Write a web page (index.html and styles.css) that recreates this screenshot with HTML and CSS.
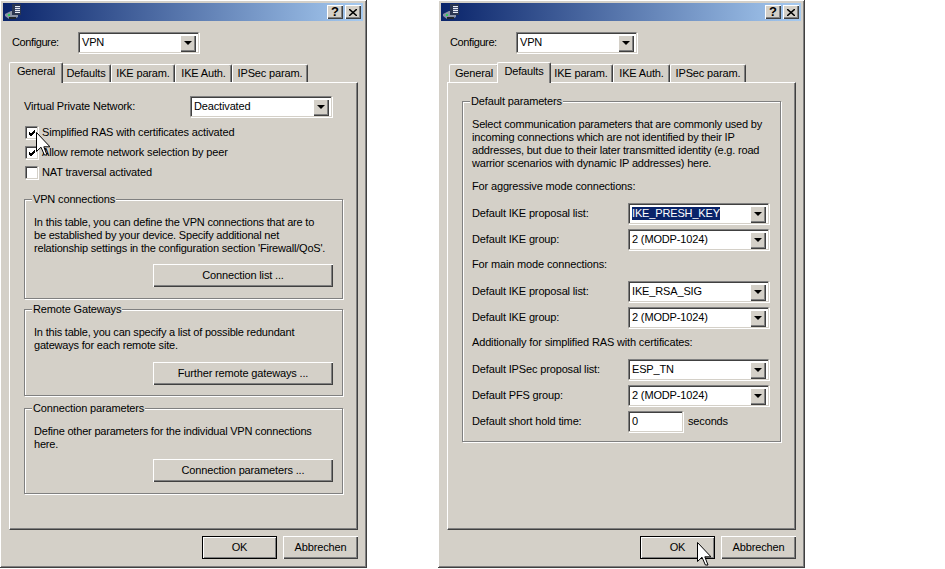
FILE: index.html
```html
<!DOCTYPE html>
<html lang="en">
<head>
<meta charset="utf-8">
<title>VPN configuration</title>
<link rel="stylesheet" href="styles.css">
</head>
<body>
<svg class="defs" width="0" height="0" aria-hidden="true">
  <symbol id="cursor" viewBox="0 0 14 24">
    <path d="M.5.5V19.5L5 15.2 8.4 23H11L7.8 14.8H14Z" fill="#fff" stroke="#000" stroke-width="1"/>
  </symbol>
  <symbol id="appicon" viewBox="0 0 17 16">
    <path d="M0 10 6 7H13V13L9 15H4L0 12Z" fill="#8a93a6"/>
    <path d="M4 13H11V15H4Z" fill="#22262e"/>
    <rect x="7" y="0" width="9" height="11" fill="#2b3650"/>
    <rect x="10" y="2" width="5" height="7" fill="#e8ecf4"/>
    <path d="M10 3.5h5M10 5.5h5M10 7.5h5" stroke="#4a5678" stroke-width="1"/>
    <path d="M3 10h2v2H3z" fill="#2fd05a"/>
  </symbol>
  <symbol id="tick" viewBox="0 0 8 7">
    <path d="M1 3 3 5 7 1M1 4 3 6 7 2M1 5 3 7 7 3" fill="none" stroke="#000" stroke-width="1"/>
  </symbol>
  <symbol id="closex" viewBox="0 0 8 7">
    <path d="M0 0 8 7M8 0 0 7" fill="none" stroke="#000" stroke-width="1.5"/>
  </symbol>
</svg>

<main class="desktop">
  <section class="window">
    <header class="titlebar">
      <svg class="appicon"><use href="#appicon"/></svg>
      <div class="capbtns"><span class="capbtn">?</span><span class="capbtn"><svg class="closex"><use href="#closex"/></svg></span></div>
    </header>
    <div class="configure">
      <span class="cfg-label">Configure:</span>
      <div class="combo cfg-combo"><span class="val">VPN</span><span class="arrow"></span></div>
    </div>
    <nav class="tabs">
      <span class="tab sel w-gen">General</span>
      <span class="tab w-def">Defaults</span>
      <span class="tab w-ike">IKE param.</span>
      <span class="tab w-auth">IKE Auth.</span>
      <span class="tab w-ips">IPSec param.</span>
    </nav>
    <div class="panel">
      <div class="vpn-row">
        <span>Virtual Private Network:</span>
        <div class="combo vpn-combo"><span class="val">Deactivated</span><span class="arrow"></span></div>
      </div>
      <div class="checks">
        <label class="check"><span class="box"><svg class="tick"><use href="#tick"/></svg></span>Simplified RAS with certificates activated</label>
        <label class="check"><span class="box"><svg class="tick"><use href="#tick"/></svg></span>Allow remote network selection by peer</label>
        <label class="check"><span class="box"></span>NAT traversal activated</label>
      </div>
      <div class="group g-vpn">
        <span class="legend">VPN connections</span>
        <p class="gtext">In this table, you can define the VPN connections that are to<br>be established by your device. Specify additional net<br>relationship settings in the configuration section 'Firewall/QoS'.</p>
        <div class="gbtn-row"><span class="btn gbtn">Connection list ...</span></div>
      </div>
      <div class="group g-gw">
        <span class="legend">Remote Gateways</span>
        <p class="gtext">In this table, you can specify a list of possible redundant<br>gateways for each remote site.</p>
        <div class="gbtn-row"><span class="btn gbtn">Further remote gateways ...</span></div>
      </div>
      <div class="group g-par">
        <span class="legend">Connection parameters</span>
        <p class="gtext">Define other parameters for the individual VPN connections<br>here.</p>
        <div class="gbtn-row"><span class="btn gbtn">Connection parameters ...</span></div>
      </div>
    </div>
    <footer class="actions">
      <span class="btn act default">OK</span>
      <span class="btn act">Abbrechen</span>
    </footer>
    <svg class="cursor cur-left"><use href="#cursor"/></svg>
  </section>

  <section class="window">
    <header class="titlebar">
      <svg class="appicon"><use href="#appicon"/></svg>
      <div class="capbtns"><span class="capbtn">?</span><span class="capbtn"><svg class="closex"><use href="#closex"/></svg></span></div>
    </header>
    <div class="configure">
      <span class="cfg-label">Configure:</span>
      <div class="combo cfg-combo"><span class="val">VPN</span><span class="arrow"></span></div>
    </div>
    <nav class="tabs">
      <span class="tab w-gen">General</span>
      <span class="tab sel w-def">Defaults</span>
      <span class="tab w-ike">IKE param.</span>
      <span class="tab w-auth">IKE Auth.</span>
      <span class="tab w-ips">IPSec param.</span>
    </nav>
    <div class="panel panel-def">
      <div class="group g-def">
        <span class="legend">Default parameters</span>
        <p class="gtext">Select communication parameters that are commonly used by<br>incoming connections which are not identified by their IP<br>addresses, but due to their later transmitted identity (e.g. road<br>warrior scenarios with dynamic IP addresses) here.</p>
        <p class="subhead first">For aggressive mode connections:</p>
        <div class="frow"><span>Default IKE proposal list:</span><div class="combo fcombo"><span class="val"><span class="hl">IKE_PRESH_KEY</span></span><span class="arrow"></span></div></div>
        <div class="frow"><span>Default IKE group:</span><div class="combo fcombo"><span class="val">2 (MODP-1024)</span><span class="arrow"></span></div></div>
        <p class="subhead">For main mode connections:</p>
        <div class="frow"><span>Default IKE proposal list:</span><div class="combo fcombo"><span class="val">IKE_RSA_SIG</span><span class="arrow"></span></div></div>
        <div class="frow"><span>Default IKE group:</span><div class="combo fcombo"><span class="val">2 (MODP-1024)</span><span class="arrow"></span></div></div>
        <p class="subhead">Additionally for simplified RAS with certificates:</p>
        <div class="frow"><span>Default IPSec proposal list:</span><div class="combo fcombo"><span class="val">ESP_TN</span><span class="arrow"></span></div></div>
        <div class="frow"><span>Default PFS group:</span><div class="combo fcombo"><span class="val">2 (MODP-1024)</span><span class="arrow"></span></div></div>
        <div class="frow"><span>Default short hold time:</span><div class="combo numbox"><span class="val">0</span></div><span class="unit">seconds</span></div>
      </div>
    </div>
    <footer class="actions">
      <span class="btn act default">OK</span>
      <span class="btn act">Abbrechen</span>
    </footer>
    <svg class="cursor cur-right"><use href="#cursor"/></svg>
  </section>
</main>
</body>
</html>
```

FILE: styles.css
```css
* { box-sizing: border-box; }
html, body { margin: 0; height: 569px; overflow: hidden; background: #fff; }
body { font: 11px/13px "Liberation Sans", Arial, sans-serif; letter-spacing: -0.15px; color: #000; }
.defs { position: absolute; }
p { margin: 0; white-space: nowrap; }

.desktop { display: flex; gap: 71px; align-items: flex-start; }

.window {
  position: relative;
  width: 367px;
  height: 568px;
  padding: 3px;
  background: #d4d0c8;
  border-right: 1px solid #404040;
  border-bottom: 1px solid #404040;
  box-shadow: inset 1px 1px 0 #fff, inset -1px -1px 0 #808080;
  display: flex;
  flex-direction: column;
}

.titlebar {
  height: 18px;
  flex: none;
  display: flex;
  align-items: center;
  justify-content: space-between;
  padding: 0 2px;
  background: linear-gradient(90deg, #0a246a, #a6caf0);
}
.appicon { width: 17px; height: 16px; display: block; }
.capbtns { display: flex; gap: 2px; }
.capbtn {
  width: 16px;
  height: 14px;
  display: flex;
  align-items: center;
  justify-content: center;
  background: #d4d0c8;
  font: bold 13px/14px "Liberation Sans", sans-serif;
  box-shadow: inset 1px 1px 0 #fff, inset -1px -1px 0 #404040, inset -2px -2px 0 #808080;
}
.closex { width: 8px; height: 7px; display: block; }

.configure {
  display: flex;
  align-items: center;
  margin: 11px 0 0 9px;
  height: 21px;
  flex: none;
}
.cfg-label { width: 66px; letter-spacing: -0.4px; }

.combo {
  position: relative;
  height: 21px;
  background: #fff;
  border: 1px solid;
  border-color: #808080 #d4d0c8 #d4d0c8 #808080;
  box-shadow: inset 1px 1px 0 #404040, 1px 1px 0 #fff;
  display: flex;
  align-items: center;
  padding: 0 2px 0 3px;
}
.val { flex: 1; white-space: nowrap; }
.arrow {
  width: 16px;
  height: 17px;
  margin-top: 1px;
  background: #d4d0c8;
  box-shadow: inset 1px 1px 0 #fff, inset -1px -1px 0 #404040, inset -2px -2px 0 #808080;
  display: flex;
  align-items: center;
  justify-content: center;
}
.arrow::after {
  content: "";
  border-style: solid;
  border-width: 4px 4px 0;
  border-color: #000 transparent transparent;
}
.cfg-combo { width: 121px; }
.vpn-combo { width: 142px; }
.fcombo { width: 141px; }
.numbox { width: 55px; }
.hl { background: #0a246a; color: #fff; display: inline-block; line-height: 13px; }

.tabs {
  position: relative;
  z-index: 1;
  display: flex;
  align-items: flex-end;
  height: 21px;
  margin: 9px 0 -1px 8px;
  flex: none;
}
.tab {
  height: 18px;
  margin-bottom: 1px;
  display: flex;
  align-items: center;
  justify-content: center;
  background: #d4d0c8;
  border-radius: 2px 2px 0 0;
  border-top: 1px solid #fff;
  border-left: 1px solid #fff;
  border-right: 1px solid #404040;
  box-shadow: inset -1px 0 0 #808080;
  white-space: nowrap;
}
.w-gen { width: 50px; }
.w-def { width: 50px; }
.w-ike { width: 64px; }
.w-auth { width: 57px; }
.w-ips { width: 76px; }
.tab.sel {
  position: relative;
  z-index: 2;
  height: 21px;
  margin: 0 -2px;
  width: 54px;
  padding-bottom: 3px;
}

.panel {
  width: 349px;
  height: 448px;
  margin-left: 6px;
  flex: none;
  border: 1px solid;
  border-color: #fff #404040 #404040 #fff;
  box-shadow: inset -1px -1px 0 #808080;
  padding: 13px 14px 0;
}
.panel-def { padding-top: 18px; }

.vpn-row {
  display: flex;
  align-items: center;
  justify-content: space-between;
  height: 21px;
  margin-right: 11px;
}
.checks { margin-top: 9px; }
.check {
  display: flex;
  align-items: center;
  height: 13px;
  margin: 0 0 7px 1px;
}
.box {
  width: 13px;
  height: 13px;
  margin-right: 4px;
  flex: none;
  background: #fff;
  border: 1px solid;
  border-color: #808080 #d4d0c8 #d4d0c8 #808080;
  box-shadow: inset 1px 1px 0 #404040, 1px 1px 0 #fff;
  display: flex;
  align-items: center;
  justify-content: center;
}
.tick { width: 8px; height: 7px; display: block; }

.group {
  display: flex;
  flex-direction: column;
  border: 1px solid #808080;
  box-shadow: inset 1px 1px 0 #fff, 1px 1px 0 #fff;
  padding: 0 9px 11px;
  width: 319px;
}
.legend {
  display: block;
  width: fit-content;
  margin: -7px 0 0 -2px;
  padding: 0 1px;
  background: #d4d0c8;
  height: 13px;
  flex: none;
}
.gtext { margin-top: 10px; letter-spacing: -0.2px; }
.gbtn-row { display: flex; justify-content: flex-end; margin-top: auto; }
.btn {
  display: flex;
  align-items: center;
  justify-content: center;
  background: #d4d0c8;
  box-shadow: inset 1px 1px 0 #fff, inset -1px -1px 0 #404040, inset -2px -2px 0 #808080;
}
.gbtn { width: 180px; height: 23px; }
.g-vpn { height: 100px; margin-top: 20px; }
.g-gw { height: 87px; margin-top: 10px; padding-bottom: 10px; }
.g-par { height: 86px; margin-top: 12px; }
.g-def { height: 341px; }

.subhead { margin-top: 8px; height: 13px; }
.subhead.first { margin-top: 10px; }
.frow {
  display: flex;
  align-items: center;
  height: 21px;
  margin-top: 5px;
  flex: none;
}
.subhead + .frow { margin-top: 10px; }
.frow > span:first-child { width: 156px; flex: none; }
.unit { margin-left: 5px; }

.actions {
  display: flex;
  justify-content: flex-end;
  gap: 6px;
  margin: 6px 5px 0 0;
  flex: none;
}
.act { width: 75px; height: 23px; }
.default {
  outline: 1px solid #000;
  outline-offset: -1px;
  box-shadow: inset 2px 2px 0 #fff, inset -2px -2px 0 #808080;
}

.cursor { position: absolute; width: 14px; height: 24px; }
.cur-left { left: 36px; top: 132px; }
.cur-right { left: 259px; top: 542px; }
```
